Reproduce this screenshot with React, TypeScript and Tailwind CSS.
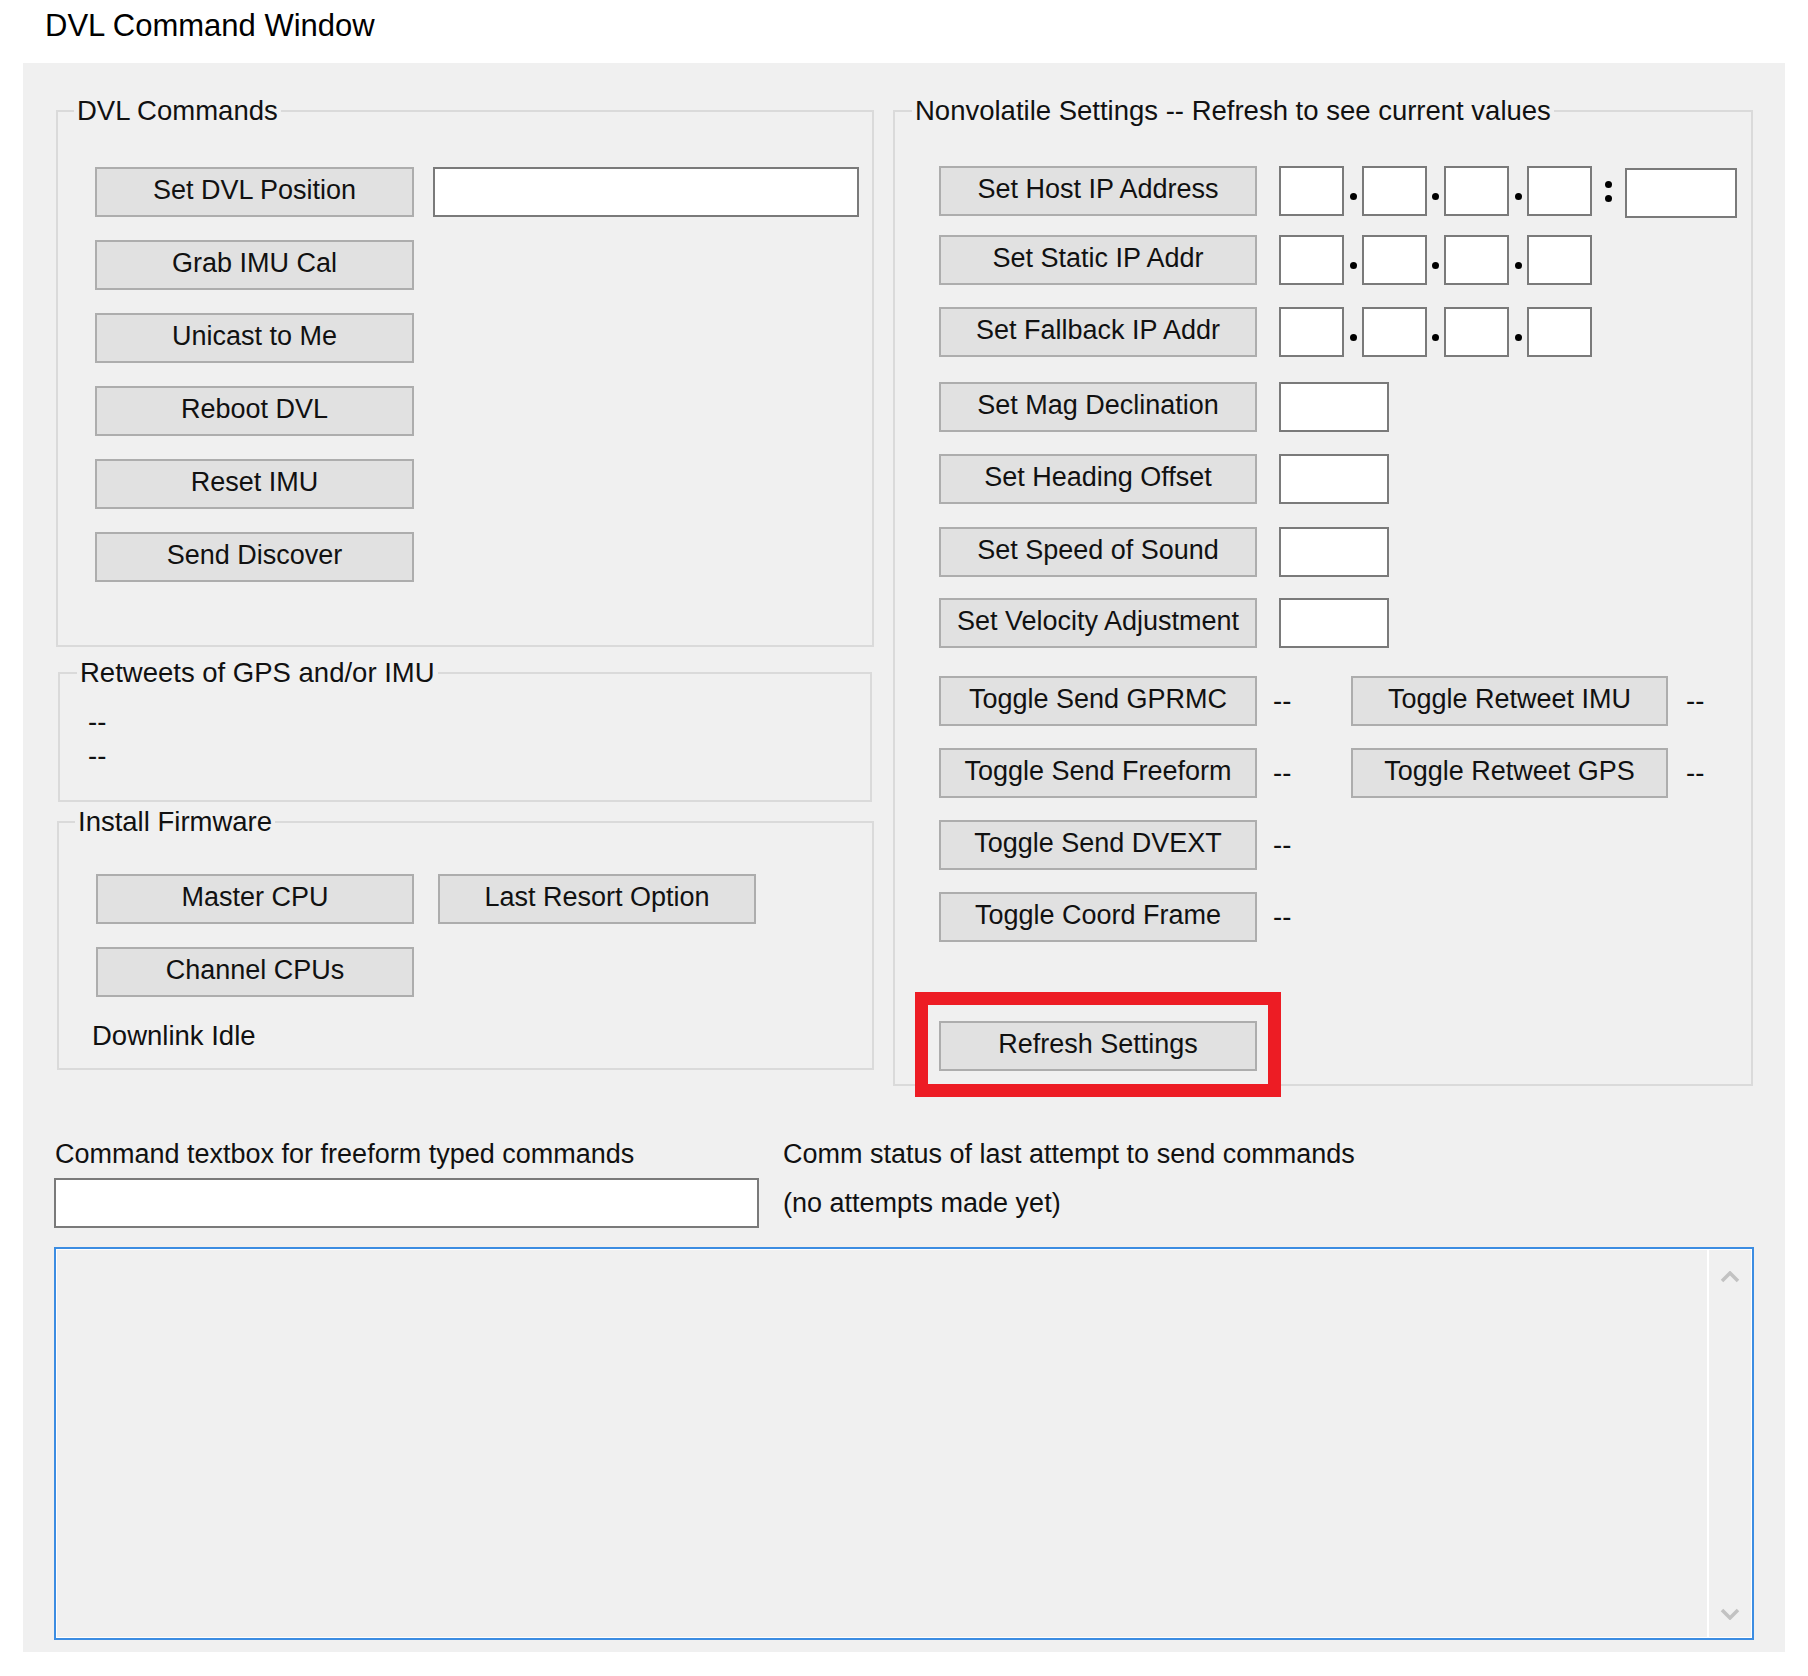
import React from 'react';

const btnBase =
  'flex h-[50px] shrink-0 items-center justify-center border-2 border-[#adadad] bg-[#e1e1e1] pb-[4px] text-[27px] leading-[32px] text-[#111]';
const boxBase = 'h-[50px] shrink-0 border-2 border-[#7a7a7a] bg-white outline-none';

function WinButton({ label, width = 'w-[319px]' }: { label: string; width?: string }) {
  return (
    <button type="button" className={`${btnBase} ${width}`}>
      {label}
    </button>
  );
}

function TextBox({ width, className = '' }: { width: string; className?: string }) {
  return <input type="text" className={`${boxBase} ${width} ${className}`} />;
}

function Dot() {
  return <span className="block h-[7px] w-[7px] rounded-full bg-black" />;
}

function DotCell({ width }: { width: string }) {
  return (
    <div className={`flex h-[50px] ${width} shrink-0 items-center justify-center pt-[10px]`}>
      <Dot />
    </div>
  );
}

function GroupBox({
  title,
  className = '',
  legendClass = '',
  children,
}: {
  title: string;
  className?: string;
  legendClass?: string;
  children: React.ReactNode;
}) {
  return (
    <fieldset className={`border-2 border-[#dadada] ${className}`}>
      <legend className={`px-[3px] text-[27.5px] leading-[32px] ${legendClass}`}>{title}</legend>
      {children}
    </fieldset>
  );
}

type Row = {
  kind: 'ip4port' | 'ip4' | 'single' | 'toggle';
  label: string;
  extra?: string;
  mt: string;
};

const settingsRows: Row[] = [
  { kind: 'ip4port', label: 'Set Host IP Address', mt: '' },
  { kind: 'ip4', label: 'Set Static IP Addr', mt: 'mt-[19px]' },
  { kind: 'ip4', label: 'Set Fallback IP Addr', mt: 'mt-[22px]' },
  { kind: 'single', label: 'Set Mag Declination', mt: 'mt-[25px]' },
  { kind: 'single', label: 'Set Heading Offset', mt: 'mt-[22px]' },
  { kind: 'single', label: 'Set Speed of Sound', mt: 'mt-[23px]' },
  { kind: 'single', label: 'Set Velocity Adjustment', mt: 'mt-[21px]' },
  { kind: 'toggle', label: 'Toggle Send GPRMC', extra: 'Toggle Retweet IMU', mt: 'mt-[28px]' },
  { kind: 'toggle', label: 'Toggle Send Freeform', extra: 'Toggle Retweet GPS', mt: 'mt-[22px]' },
  { kind: 'toggle', label: 'Toggle Send DVEXT', mt: 'mt-[22px]' },
  { kind: 'toggle', label: 'Toggle Coord Frame', mt: 'mt-[22px]' },
];

function IpBoxes({ port }: { port?: boolean }) {
  return (
    <div className="ml-[22px] flex items-center">
      <TextBox width="w-[65px]" />
      <DotCell width="w-[18px]" />
      <TextBox width="w-[65px]" />
      <DotCell width="w-[17px]" />
      <TextBox width="w-[65px]" />
      <DotCell width="w-[18px]" />
      <TextBox width="w-[65px]" />
      {port && (
        <>
          <div className="flex h-[50px] w-[33px] shrink-0 flex-col items-center justify-center gap-[7px]">
            <Dot />
            <Dot />
          </div>
          <TextBox width="w-[112px]" className="mt-[4px]" />
        </>
      )}
    </div>
  );
}

function SettingsRow({ row }: { row: Row }) {
  return (
    <div className={`flex h-[50px] items-center ${row.mt}`}>
      <WinButton label={row.label} width="w-[318px]" />
      {row.kind === 'ip4port' && <IpBoxes port />}
      {row.kind === 'ip4' && <IpBoxes />}
      {row.kind === 'single' && <TextBox width="w-[110px]" className="ml-[22px]" />}
      {row.kind === 'toggle' && (
        <>
          <div className="w-[94px] shrink-0 pl-[16px] text-[27.5px] leading-[32px]">--</div>
          {row.extra && (
            <>
              <WinButton label={row.extra} width="w-[317px]" />
              <div className="pl-[18px] text-[27.5px] leading-[32px]">--</div>
            </>
          )}
        </>
      )}
    </div>
  );
}

function Chevron({ down }: { down?: boolean }) {
  return (
    <svg width="20" height="12" viewBox="0 0 20 12" className="block">
      <polyline
        points={down ? '2,2 10,10 18,2' : '2,10 10,2 18,10'}
        fill="none"
        stroke="#c2c2c2"
        strokeWidth="3.5"
      />
    </svg>
  );
}

export default function App() {
  return (
    <div className="h-[1676px] w-[1808px] overflow-hidden bg-white font-['Liberation_Sans',Arial,sans-serif] text-[#111]">
      <div className="h-[63px] pl-[45px] pt-[8px] text-[31px] leading-[36px] text-black">DVL Command Window</div>

      <div className="ml-[23px] h-[1589px] w-[1762px] bg-[#f0f0f0] pl-[31px] pt-[32px]">
        <div className="ml-[2px] flex items-start gap-[19px]">
          {/* left column */}
          <div className="flex w-[818px] shrink-0 flex-col">
            <GroupBox title="DVL Commands" legendClass="ml-[16px]">
              <div className="flex flex-col gap-[23px] pb-[63px] pl-[37px] pt-[40px]">
                <div className="flex gap-[19px]">
                  <WinButton label="Set DVL Position" />
                  <TextBox width="w-[426px]" />
                </div>
                {['Grab IMU Cal', 'Unicast to Me', 'Reboot DVL', 'Reset IMU', 'Send Discover'].map((l) => (
                  <WinButton key={l} label={l} />
                ))}
              </div>
            </GroupBox>

            <GroupBox title="Retweets of GPS and/or IMU" className="mx-[2px] mt-[10px]" legendClass="ml-[17px]">
              <div className="pb-[27px] pl-[28px] pt-[16px] text-[27.5px] leading-[34px]">
                <div>--</div>
                <div>--</div>
              </div>
            </GroupBox>

            <GroupBox title="Install Firmware" className="ml-[1px] mt-[4px]" legendClass="ml-[16px]">
              <div className="pb-[15px] pl-[33px] pt-[36px]">
                <div className="pl-[4px]">
                  <div className="flex gap-[24px]">
                    <WinButton label="Master CPU" width="w-[318px]" />
                    <WinButton label="Last Resort Option" width="w-[318px]" />
                  </div>
                  <div className="mt-[23px]">
                    <WinButton label="Channel CPUs" width="w-[318px]" />
                  </div>
                </div>
                <div className="mt-[22px] text-[27.5px] leading-[34px]">Downlink Idle</div>
              </div>
            </GroupBox>
          </div>

          {/* right column */}
          <GroupBox
            title="Nonvolatile Settings -- Refresh to see current values"
            className="w-[860px] shrink-0"
            legendClass="ml-[17px]"
          >
            <div className="flex flex-col pb-[13px] pl-[44px] pt-[39px]">
              {settingsRows.map((r) => (
                <SettingsRow key={r.label} row={r} />
              ))}
              <div className="relative mt-[79px] w-[318px]">
                <WinButton label="Refresh Settings" width="w-[318px]" />
                <div className="pointer-events-none absolute left-[-24px] top-[-29px] h-[105px] w-[366px] border-[13px] border-[#ed1c24]" />
              </div>
            </div>
          </GroupBox>
        </div>

        {/* freeform command + status */}
        <div className="mt-[53px] flex">
          <div className="flex w-[705px] shrink-0 flex-col">
            <div className="pl-[1px] text-[27px] leading-[30px]">Command textbox for freeform typed commands</div>
            <TextBox width="w-[705px]" className="mt-[9px]" />
          </div>
          <div className="ml-[24px] text-[27px] leading-[30px]">
            <div>Comm status of last attempt to send commands</div>
            <div className="mt-[19px]">(no attempts made yet)</div>
          </div>
        </div>

        <div className="mt-[19px] h-[393px] w-[1700px] border-2 border-[#3c8de2]">
          <div className="flex h-full border border-white">
            <div className="flex-1" />
            <div className="flex w-[44px] flex-col items-center justify-between border-l-2 border-white pb-[17px] pt-[21px]">
              <Chevron />
              <Chevron down />
            </div>
          </div>
        </div>
      </div>
    </div>
  );
}
